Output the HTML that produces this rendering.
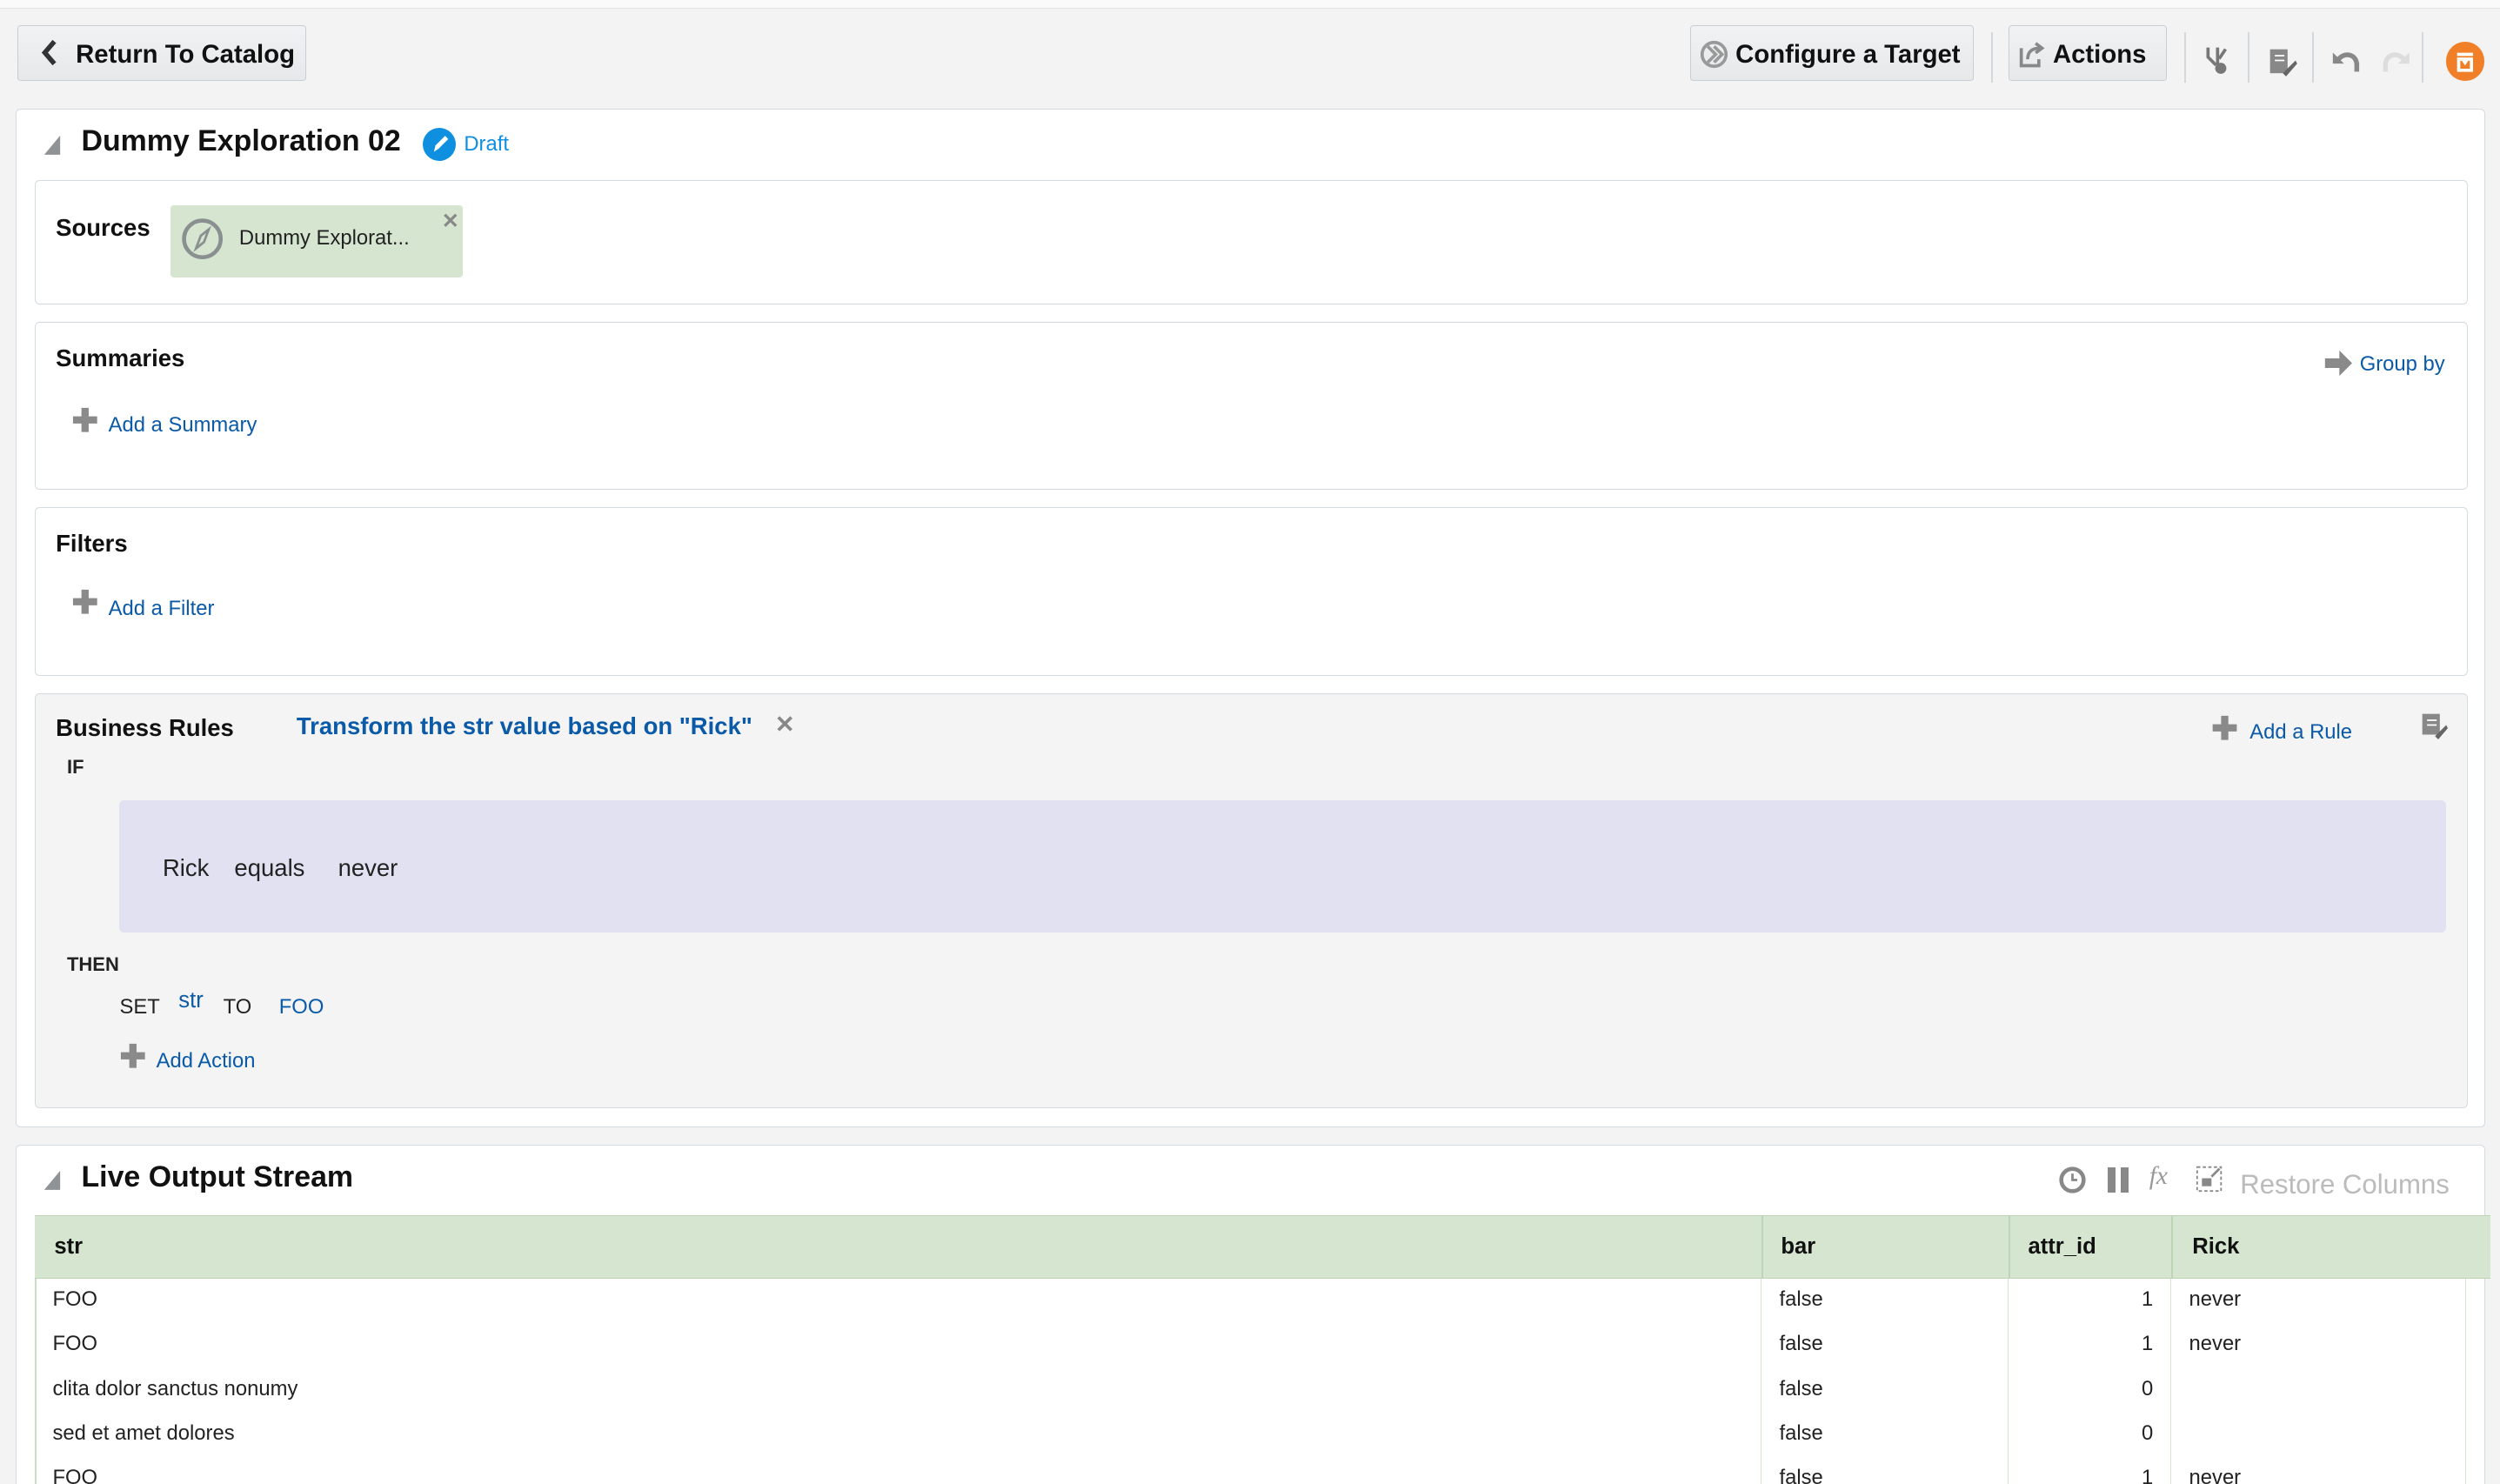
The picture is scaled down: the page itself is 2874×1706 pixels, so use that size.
<!DOCTYPE html>
<html><head><meta charset="utf-8"><style>
html,body{margin:0;padding:0;overflow:hidden;width:2874px;height:1706px;background:#f3f3f3}
#w{zoom:1.8329;position:relative;width:1568px;height:931px;font-family:"Liberation Sans",sans-serif;color:#222;font-size:13px}
.a{position:absolute}
.btn{position:absolute;background:linear-gradient(#f1f2f3,#e6e8ea);border:1px solid #c6ced6;border-radius:2px;font-weight:bold;font-size:16px;color:#111;box-sizing:border-box;line-height:36px}
.box{position:absolute;background:#fff;border:1px solid #d3dbe2;border-radius:3px;box-sizing:border-box}
.h{font-weight:bold;font-size:15px;color:#111}
.lnk{color:#0a5aa8;font-size:13px}
.plus{color:#8a8a8a;font-weight:bold;font-size:20px}
.sep{position:absolute;top:20px;width:1px;height:32px;background:#d3d8dc}
.row{position:absolute;left:22px;width:1525px;height:28px;border-bottom:1px solid #c8dfc3;background:#fff}
.c{position:absolute;top:0;height:28px;line-height:26px;font-size:13px;border-right:1px solid #d6e5d0;box-sizing:border-box;padding:0 11px}
</style></head><body><div id="w">
<div class="a" style="left:0;top:0;width:1568px;height:5px;background:#fafafa;border-bottom:1px solid #e4e4e4"></div>
<div class="btn" style="left:11px;top:16px;width:181px;height:35px;padding-left:36px">Return To Catalog</div>
<svg class="a" style="left:25px;top:24px" width="12" height="18"><path d="M9 2 L3 9 L9 16" stroke="#333" stroke-width="3" fill="none"/></svg>
<div class="btn" style="left:1060px;top:16px;width:178px;height:35px;padding-left:28px">Configure a Target</div>
<svg class="a" style="left:1066px;top:25px" width="20" height="18"><circle cx="9" cy="9" r="7.5" stroke="#999" stroke-width="2" fill="none"/><path d="M5 4l5 5-5 5M9 4l5 5-5 5" stroke="#999" stroke-width="2" fill="none"/></svg>
<div class="sep" style="left:1249px"></div>
<div class="btn" style="left:1260px;top:16px;width:99px;height:35px;padding-left:27px">Actions</div>
<svg class="a" style="left:1266px;top:26px" width="18" height="17"><path d="M2 4v11h11v-4" stroke="#888" stroke-width="2" fill="none"/><path d="M6 11c0-5 3-7 8-7M11 1l4 3-4 3" stroke="#888" stroke-width="2" fill="none"/></svg>
<div class="sep" style="left:1370px"></div><div class="sep" style="left:1410px"></div><div class="sep" style="left:1450px"></div><div class="sep" style="left:1519px"></div>
<svg class="a" style="left:1381px;top:28px" width="20" height="20"><path d="M4 2v6l5 5M10 2v11M15 3l-4 6" stroke="#777" stroke-width="2" fill="none"/><circle cx="12" cy="15" r="3.5" fill="#777"/></svg>
<svg class="a" style="left:1422px;top:29px" width="20" height="20"><rect x="2" y="2" width="11" height="15" fill="#888"/><path d="M5 6h6M5 9h6" stroke="#fff"/><path d="M10 17l8-8 1 2-7 8z" fill="#666"/></svg>
<svg class="a" style="left:1462px;top:29px" width="20" height="18"><path d="M4 9c3-5 11-5 12 2v5" stroke="#888" stroke-width="3" fill="none"/><path d="M1 4v7h7z" fill="#888"/></svg>
<svg class="a" style="left:1492px;top:29px" width="20" height="18"><path d="M16 9c-3-5-11-5-12 2v5" stroke="#ddd" stroke-width="3" fill="none"/><path d="M19 4v7h-7z" fill="#ddd"/></svg>
<div class="a" style="left:1534px;top:26px;width:24px;height:25px;border-radius:12px;background:#f07f27"></div>
<svg class="a" style="left:1539px;top:31px" width="14" height="15"><path d="M2 3h10M3 6h8v7H3z" stroke="#fff" stroke-width="2" fill="none"/><path d="M5 7l2 3 2-3" fill="#fff"/></svg>

<div class="box" style="left:10px;top:68px;width:1549px;height:639px;background:#fff"></div>
<svg class="a" style="left:27px;top:84px" width="12" height="14"><path d="M11 1V13H1z" fill="#8f9396"/></svg>
<div class="a" style="left:51px;top:78px;font-size:18.5px;font-weight:bold;color:#111">Dummy Exploration 02</div>
<div class="a" style="left:265px;top:80px;width:21px;height:21px;border-radius:11px;background:#0f8fe0"></div>
<svg class="a" style="left:265px;top:80px" width="21" height="21"><path d="M7 15l1-4 6-6 2 2-6 6z" fill="#fff"/></svg>
<div class="a" style="left:291px;top:83px;color:#0f8fe0;font-size:13px">Draft</div>

<div class="box" style="left:22px;top:113px;width:1526px;height:78px"></div>
<div class="a h" style="left:35px;top:134px">Sources</div>
<div class="a" style="left:107px;top:129px;width:183px;height:45px;background:#d6e5d0;border-radius:2px"></div>
<svg class="a" style="left:113px;top:136px" width="28" height="28"><circle cx="14" cy="14" r="11.5" stroke="#8a8f8f" stroke-width="2.5" fill="none"/><path d="M18 8l-3 8-5 4 3-8z" stroke="#8a8f8f" stroke-width="1.5" fill="none"/></svg>
<div class="a" style="left:150px;top:142px;font-size:13px;color:#222">Dummy Explorat...</div>
<div class="a" style="left:277px;top:131px;font-size:13px;font-weight:bold;color:#888">✕</div>

<div class="box" style="left:22px;top:202px;width:1526px;height:105px"></div>
<div class="a h" style="left:35px;top:216px">Summaries</div>
<div class="a plus" style="left:45px;top:252px">✚</div><div class="a lnk" style="left:68px;top:259px">Add a Summary</div>
<svg class="a" style="left:1457px;top:219px" width="19" height="18"><path d="M1 6h9V1l8 8-8 8v-5H1z" fill="#8a8a8a"/></svg>
<div class="a lnk" style="left:1480px;top:221px">Group by</div>

<div class="box" style="left:22px;top:318px;width:1526px;height:106px"></div>
<div class="a h" style="left:35px;top:332px">Filters</div>
<div class="a plus" style="left:45px;top:366px">✚</div><div class="a lnk" style="left:68px;top:374px">Add a Filter</div>

<div class="box" style="left:22px;top:435px;width:1526px;height:260px;background:#f4f4f5"></div>
<div class="a h" style="left:35px;top:448px">Business Rules</div>
<div class="a" style="left:186px;top:447px;font-size:15px;font-weight:bold;color:#0a5aa8">Transform the str value based on "Rick"</div>
<div class="a" style="left:486px;top:446px;font-size:15px;font-weight:bold;color:#888">✕</div>
<div class="a plus" style="left:1387px;top:445px">✚</div><div class="a lnk" style="left:1411px;top:452px">Add a Rule</div>
<svg class="a" style="left:1517px;top:446px" width="20" height="20"><rect x="2" y="2" width="11" height="13" fill="#888"/><path d="M5 6h6M5 9h6" stroke="#fff"/><path d="M10 16l7-7 1 2-6 7z" fill="#666"/></svg>
<div class="a" style="left:42px;top:474px;font-size:12px;font-weight:bold">IF</div>
<div class="a" style="left:75px;top:502px;width:1459px;height:83px;background:#e2e1f2;border-radius:3px"></div>
<div class="a" style="left:102px;top:536px;font-size:15px">Rick</div>
<div class="a" style="left:147px;top:536px;font-size:15px">equals</div>
<div class="a" style="left:212px;top:536px;font-size:15px">never</div>
<div class="a" style="left:42px;top:598px;font-size:12px;font-weight:bold">THEN</div>
<div class="a" style="left:75px;top:624px;font-size:13px">SET</div>
<div class="a" style="left:112px;top:620px;font-size:14px;color:#0a5aa8">str</div>
<div class="a" style="left:140px;top:624px;font-size:13px">TO</div>
<div class="a" style="left:175px;top:624px;font-size:13px;color:#0a5aa8">FOO</div>
<div class="a plus" style="left:75px;top:651px">✚</div><div class="a lnk" style="left:98px;top:658px">Add Action</div>

<div class="box" style="left:10px;top:718px;width:1549px;height:230px"></div>
<svg class="a" style="left:27px;top:733px" width="12" height="14"><path d="M11 1V13H1z" fill="#8f9396"/></svg>
<div class="a" style="left:51px;top:728px;font-size:18.5px;font-weight:bold;color:#111">Live Output Stream</div>
<svg class="a" style="left:1291px;top:731px" width="18" height="18"><circle cx="9" cy="9" r="7" stroke="#888" stroke-width="2.5" fill="none"/><path d="M9 5v4h3" stroke="#888" stroke-width="1.5" fill="none"/></svg>
<div class="a" style="left:1322px;top:732px;width:5px;height:16px;background:#888"></div><div class="a" style="left:1330px;top:732px;width:5px;height:16px;background:#888"></div>
<div class="a" style="left:1348px;top:729px;font-family:'Liberation Serif',serif;font-style:italic;color:#999;font-size:16px">fx</div>
<svg class="a" style="left:1377px;top:730px" width="18" height="19"><rect x="1" y="2" width="15" height="15" stroke="#888" stroke-dasharray="2 1.5" fill="none"/><rect x="4" y="9" width="6" height="5" fill="#888"/><path d="M10 8l5-5" stroke="#888" stroke-width="1.5"/></svg>
<div class="a" style="left:1405px;top:733px;font-size:17px;color:#bbb">Restore Columns</div>

<div class="a" style="left:22px;top:762px;width:1540px;height:40px;background:#d5e5d0;border-top:1px solid #bcd5b5;border-bottom:1px solid #bcd5b5;box-sizing:border-box"></div>
<div class="a h" style="left:34px;top:774px;font-size:14px">str</div>
<div class="a h" style="left:1117px;top:774px;font-size:14px">bar</div>
<div class="a h" style="left:1272px;top:774px;font-size:14px">attr_id</div>
<div class="a h" style="left:1375px;top:774px;font-size:14px">Rick</div>
<div class="a" style="left:1105px;top:762px;width:1px;height:40px;background:#bcd5b5"></div>
<div class="a" style="left:1260px;top:762px;width:1px;height:40px;background:#bcd5b5"></div>
<div class="a" style="left:1362px;top:762px;width:1px;height:40px;background:#bcd5b5"></div>

<div class="row" style="top:802px"><div class="c" style="left:0;width:1083px">FOO</div><div class="c" style="left:1083px;width:155px">false</div><div class="c" style="left:1238px;width:102px;text-align:right">1</div><div class="c" style="left:1340px;width:185px">never</div></div>
<div class="row" style="top:830px"><div class="c" style="left:0;width:1083px">FOO</div><div class="c" style="left:1083px;width:155px">false</div><div class="c" style="left:1238px;width:102px;text-align:right">1</div><div class="c" style="left:1340px;width:185px">never</div></div>
<div class="row" style="top:858px"><div class="c" style="left:0;width:1083px">clita dolor sanctus nonumy</div><div class="c" style="left:1083px;width:155px">false</div><div class="c" style="left:1238px;width:102px;text-align:right">0</div><div class="c" style="left:1340px;width:185px"></div></div>
<div class="row" style="top:886px"><div class="c" style="left:0;width:1083px">sed et amet dolores</div><div class="c" style="left:1083px;width:155px">false</div><div class="c" style="left:1238px;width:102px;text-align:right">0</div><div class="c" style="left:1340px;width:185px"></div></div>
<div class="row" style="top:914px"><div class="c" style="left:0;width:1083px">FOO</div><div class="c" style="left:1083px;width:155px">false</div><div class="c" style="left:1238px;width:102px;text-align:right">1</div><div class="c" style="left:1340px;width:185px">never</div></div>
<div class="a" style="left:22px;top:802px;width:1px;height:130px;background:#c8dfc3"></div>
</div></body></html>
